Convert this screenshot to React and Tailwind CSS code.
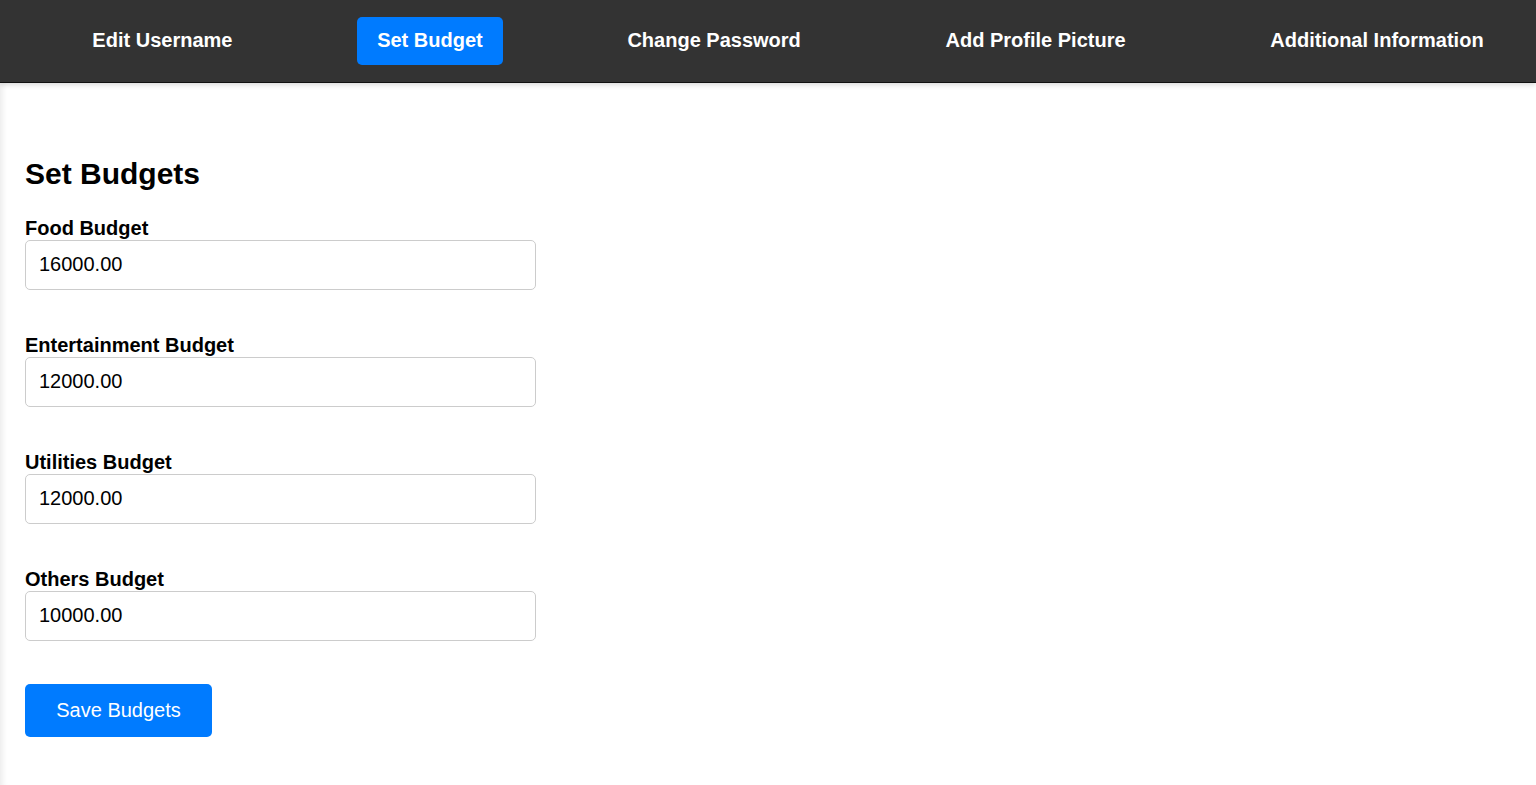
const NAV_ITEMS = ['Edit Username', 'Set Budget', 'Change Password', 'Add Profile Picture', 'Additional Information'];

const BUDGETS = [
  { label: 'Food Budget', value: '16000.00' },
  { label: 'Entertainment Budget', value: '12000.00' },
  { label: 'Utilities Budget', value: '12000.00' },
  { label: 'Others Budget', value: '10000.00' },
];

export default function App() {
  return (
    <div className="min-h-[785px] bg-white font-['Liberation_Sans',Arial,sans-serif] text-[20px] text-black">
      {/* Top nav */}
      <div className="relative z-10 overflow-hidden bg-[#333333] border-b border-[#111] shadow-[0_2px_5px_rgba(0,0,0,0.15)]">
        <nav className="ml-5 flex w-[1536px] items-center justify-around py-[17px]">
          {NAV_ITEMS.map((item) => (
            <button
              key={item}
              className={
                'flex h-12 items-center rounded-[5px] px-5 pb-[2px] text-[20px] font-bold text-white ' +
                (item === 'Set Budget' ? 'bg-[#007bff]' : 'bg-transparent')
              }
            >
              {item}
            </button>
          ))}
        </nav>
      </div>

      {/* Content */}
      <main className="min-h-[702px] px-[25px] pt-[74px] shadow-[inset_7px_0_6px_-5px_rgba(0,0,0,0.09)]">
        <h2 className="text-[30px] font-bold leading-[34.5px]">Set Budgets</h2>
        <form className="mt-[25px]" onSubmit={(e) => e.preventDefault()}>
          {BUDGETS.map((b, i) => (
            <div key={b.label} className={i < BUDGETS.length - 1 ? 'mb-[44px]' : ''}>
              <label className="block font-bold leading-[23px]">{b.label}</label>
              <input
                type="text"
                defaultValue={b.value}
                className="block h-[50px] w-[511px] rounded-[5px] border border-[#cccccc] pl-[13px] pr-3 text-[20px] text-black outline-none"
              />
            </div>
          ))}
          <button
            type="submit"
            className="mt-[43px] flex h-[53px] w-[187px] items-center justify-center rounded-[5px] bg-[#007bff] text-[20px] text-white"
          >
            Save Budgets
          </button>
        </form>
      </main>
    </div>
  );
}
